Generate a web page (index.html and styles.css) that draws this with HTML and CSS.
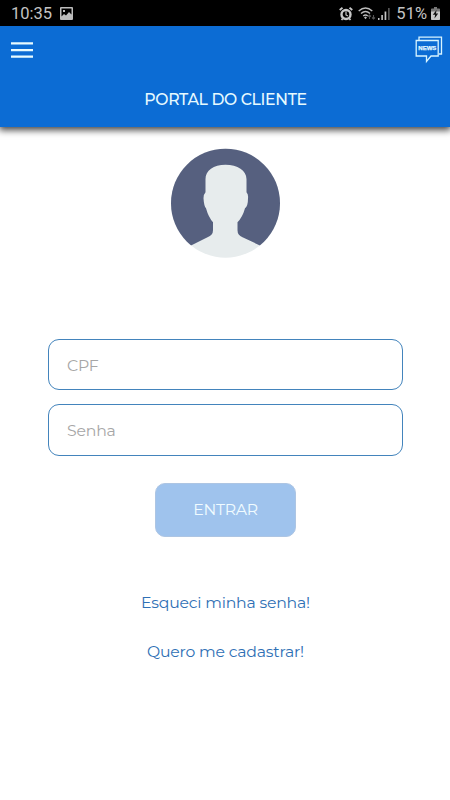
FILE: index.html
```html
<!DOCTYPE html>
<html lang="pt-BR">
<head>
<meta charset="utf-8">
<title>Portal do Cliente</title>
<link rel="stylesheet" href="styles.css">
</head>
<body>
<div class="status">
  <span class="clock">10:35</span>
  <svg class="photo" width="13" height="13" viewBox="0 0 13 13"><path fill="#bdbdbd" fill-rule="evenodd" d="M1 0h11a1 1 0 0 1 1 1v11a1 1 0 0 1-1 1H1a1 1 0 0 1-1-1V1a1 1 0 0 1 1-1zM1.5 1.5v8L4 7l2 1.5L9 5l2.500 2.500v-6zM3 3h2v2H3z"/></svg>
  <div class="system">
    <svg width="14" height="14" viewBox="0 0 14 14" fill="none" stroke="#c9c9c9"><circle cx="7" cy="7.500" r="4.500" stroke-width="2.400"/><path stroke-width="1.800" d="M.7 3 3.500.8M10.500.8 13.300 3M2.500 13l1.300-1.500M11.500 13l-1.300-1.500"/><path stroke-width="1.200" d="M7 4.500V8l2 1"/></svg>
    <svg class="wifi" width="18" height="14" viewBox="0 0 18 14" fill="none" stroke="#bdbdbd" stroke-width="1.400"><path d="M.7 4Q7.500-2 14.300 4M3 6.500q4.500-4 9 0M5.200 9q2.300-2 4.600 0"/><path fill="#bdbdbd" stroke="none" d="m7.500 9.500 1.500 1-1.500 1.700L6 10.500z"/><path stroke="#555" stroke-width="1.100" d="M11.500 12V8m-1.500 1.500L11.500 8 13 9.500M15.500 8v4M14 10.500l1.500 1.500 1.500-1.500"/></svg>
    <svg class="signal" width="12" height="12" viewBox="0 0 12 12"><path fill="#c4c4c4" d="M0 10h1.500v2H0zM3.300 7h1.600v5H3.300zM6.600 3.500h1.700V12H6.600z"/><path fill="#555" d="M10 0h1.700v12H10z"/></svg>
    <span class="percent">51%</span>
    <svg class="battery" width="9" height="13" viewBox="0 0 9 13"><path fill="#777" d="M3 0h3v1.500h2.200q.8 0 .8.800V5H0V2.300q0-.8.800-.8H3z"/><path fill="#c9c9c9" d="M0 4.500h9v7.700q0 .8-.8.800H.8q-.8 0-.8-.8z"/><path fill="#111" d="M5.500 3 1.800 7.800h2.300L3.500 11.500 7.200 6.500H5z"/></svg>
  </div>
</div>
<header class="header">
  <div class="tools">
    <svg class="menu" width="22" height="28" viewBox="0 0 22 28"><path stroke="#e8fbff" stroke-width="2.300" d="M0 7.400h22M0 14.200h22M0 20.700h22"/></svg>
    <svg class="news" width="28" height="28" viewBox="0 0 28 28"><path fill="none" stroke="#d8f4ff" stroke-width="1.300" d="M4 4V1.200h22.500V18H24M1.200 4.500h22V20H16l-4.500 5.500V20H1.200z"/><text x="12.300" y="14" text-anchor="middle" textLength="18" lengthAdjust="spacingAndGlyphs">NEWS</text></svg>
  </div>
  <h1 class="title">PORTAL DO CLIENTE</h1>
</header>
<main class="login">
  <svg class="avatar" width="110" height="110" viewBox="0 0 110 110"><defs><clipPath id="disc"><circle cx="54.500" cy="55.200" r="54.500"/></clipPath></defs><g clip-path="url(#disc)"><g transform="translate(-.5 .2)"><path fill="#e7eced" d="M0 0h111v111H0z"/><path fill="#56607f" d="M0-1h111v99H91L72 89Q67 87 67 82V74Q72 69 74.500 60Q77.500 58 77.500 50Q78 46 76 44V31C76 22 67 16.500 55 16.500S35 22 35 31V44Q33 46 33 50Q33.500 58 35.500 60Q38 69 42.500 74V82Q42.500 87 37 89L19 98H0z"/></g></g></svg>
  <form class="form">
    <input class="field" type="text" placeholder="CPF">
    <input class="field password" type="password" placeholder="Senha">
    <button class="enter" type="button">ENTRAR</button>
  </form>
  <a class="link forgot">Esqueci minha senha!</a>
  <a class="link register">Quero me cadastrar!</a>
</main>
</body>
</html>
```
FILE: styles.css
```css
* { box-sizing: border-box; }
body { margin: 0; height: 800px; overflow: hidden; background: #fff; font-family: Montserrat, Inter, sans-serif; display: flex; flex-direction: column; }
.status { height: 26px; flex: none; background: #000; color: #c4c4c4; display: flex; align-items: center; padding: 1px 10px 0 11px; font: 16.500px/26px Roboto, sans-serif; }
.status span { padding-top: 1px; }
.photo { margin-left: 8px; }
.system { display: flex; align-items: center; margin-left: auto; }
.wifi { margin-left: 5px; }
.signal { margin-left: 2px; }
.percent { margin-left: 6px; }
.battery { margin-left: 4px; }
.header { height: 101px; flex: none; background: #0c6cd4; box-shadow: 0 2px 7px 1px rgba(0, 0, 0, .75); }
.tools { display: flex; justify-content: space-between; padding: 10px 7px 0 11px; height: 61px; }
.news text { font: bold 6px "Liberation Sans", sans-serif; fill: #e3f8ff; stroke: #e3f8ff; stroke-width: .25px; }
.title { margin: 0; padding-left: 1px; text-align: center; font-size: 15.700px; line-height: 26px; font-weight: 500; letter-spacing: -.34px; color: #e6faff; }
.login { display: flex; flex-direction: column; align-items: center; padding: 21px 0 0 1px; }
.form { width: 355px; margin-top: 81px; display: flex; flex-direction: column; align-items: center; }
.field { width: 100%; height: 51px; margin-bottom: 14px; padding: 2px 18px 0; border: 1px solid #4384bc; border-radius: 11px; background: #fff; font: 400 15.700px Montserrat, Inter, sans-serif; outline: 0; }
.password { height: 52px; padding-top: 0; }
.field::placeholder { color: #a6a6a6; opacity: 1; letter-spacing: -.2px; }
.enter { width: 141px; height: 54px; margin-top: 13px; border: 1px solid #adc5e3; border-radius: 10px; background: #9fc3ed; color: #f0fbff; font: 400 15.700px Montserrat, Inter, sans-serif; letter-spacing: -.25px; padding: 0 0 2px; }
.link { color: #2f70b5; font-size: 15.700px; line-height: 24px; letter-spacing: -.2px; }
.forgot { margin-top: 54px; }
.register { margin-top: 25px; }
```
